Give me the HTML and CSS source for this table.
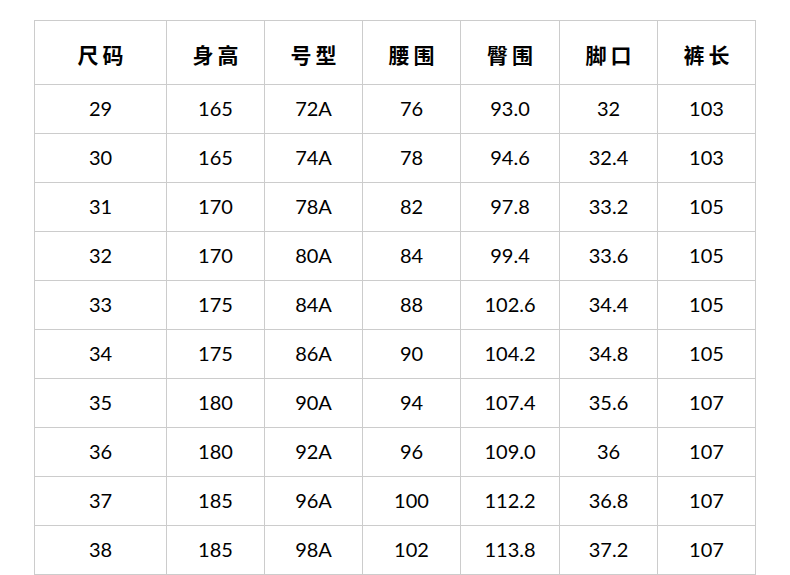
FILE: index.html
```html
<!DOCTYPE html>
<html lang="zh">
<head>
<meta charset="utf-8">
<link rel="stylesheet" href="styles.css">
</head>
<body>
<table class="size-table">
  <colgroup>
    <col class="c-wide"><col class="c-n"><col class="c-n"><col class="c-n"><col class="c-w99"><col class="c-n"><col class="c-n">
  </colgroup>
  <thead>
    <tr class="head"><th>尺码</th><th>身高</th><th>号型</th><th>腰围</th><th>臀围</th><th>脚口</th><th>裤长</th></tr>
  </thead>
  <tbody>
    <tr><td>29</td><td>165</td><td>72A</td><td>76</td><td>93.0</td><td>32</td><td>103</td></tr>
    <tr><td>30</td><td>165</td><td>74A</td><td>78</td><td>94.6</td><td>32.4</td><td>103</td></tr>
    <tr><td>31</td><td>170</td><td>78A</td><td>82</td><td>97.8</td><td>33.2</td><td>105</td></tr>
    <tr><td>32</td><td>170</td><td>80A</td><td>84</td><td>99.4</td><td>33.6</td><td>105</td></tr>
    <tr><td>33</td><td>175</td><td>84A</td><td>88</td><td>102.6</td><td>34.4</td><td>105</td></tr>
    <tr><td>34</td><td>175</td><td>86A</td><td>90</td><td>104.2</td><td>34.8</td><td>105</td></tr>
    <tr><td>35</td><td>180</td><td>90A</td><td>94</td><td>107.4</td><td>35.6</td><td>107</td></tr>
    <tr><td>36</td><td>180</td><td>92A</td><td>96</td><td>109.0</td><td>36</td><td>107</td></tr>
    <tr><td>37</td><td>185</td><td>96A</td><td>100</td><td>112.2</td><td>36.8</td><td>107</td></tr>
    <tr><td>38</td><td>185</td><td>98A</td><td>102</td><td>113.8</td><td>37.2</td><td>107</td></tr>
  </tbody>
</table>
</body>
</html>
```
FILE: styles.css
```css
html, body {
  margin: 0;
  padding: 0;
  background: #ffffff;
}
body {
  padding: 20px 0 0 34px;
}
.size-table {
  border-collapse: separate;
  border-spacing: 0;
  table-layout: fixed;
  width: 722px;
  border-left: 1px solid #cccccc;
  border-top: 1px solid #cccccc;
  font-family: "Lato", "Noto Sans CJK SC", sans-serif;
  color: #000000;
}
.c-wide { width: 132px; }
.c-n { width: 98px; }
.c-w99 { width: 99px; }
.size-table th,
.size-table td {
  box-sizing: border-box;
  border-right: 1px solid #cccccc;
  border-bottom: 1px solid #cccccc;
  text-align: center;
  vertical-align: middle;
  padding: 0;
}
.size-table th {
  height: 64px;
  font-family: "Noto Sans CJK SC", sans-serif;
  font-size: 21px;
  font-weight: 700;
  letter-spacing: 4px;
  padding: 2px 0 0 4px;
}
.size-table td {
  height: 49px;
  font-size: 20px;
  font-weight: 400;
  padding-bottom: 2px;
}
```
